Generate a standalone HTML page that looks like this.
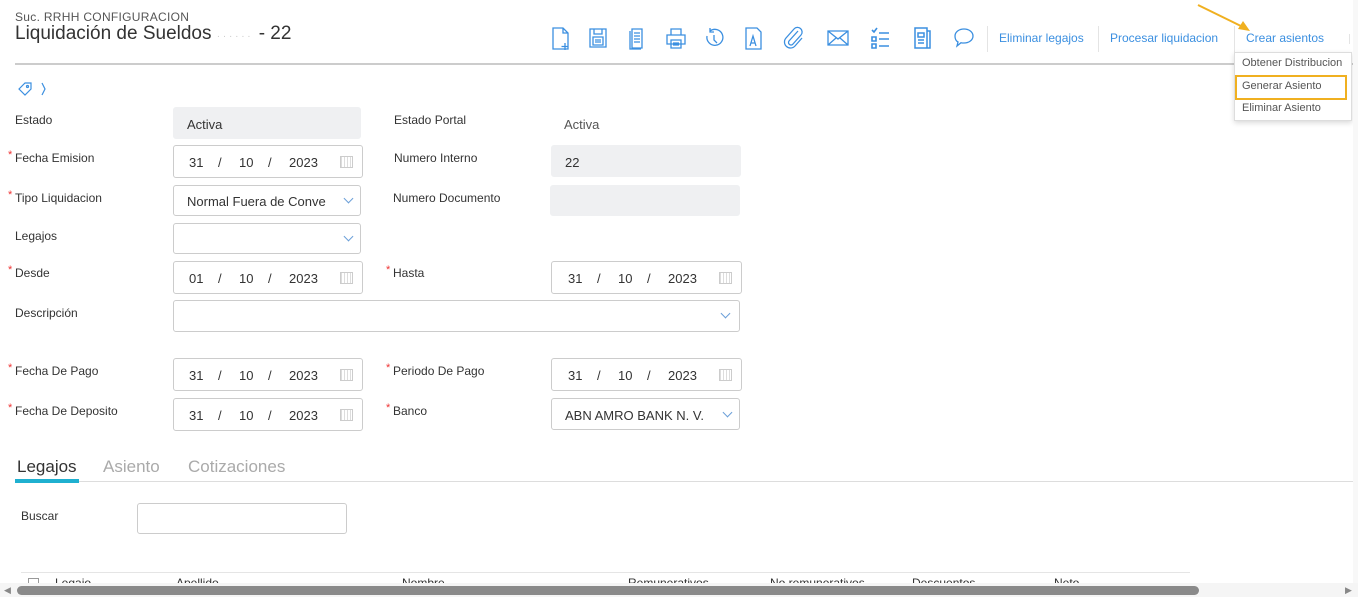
<!DOCTYPE html>
<html><head><meta charset="utf-8"><style>
*{box-sizing:border-box;margin:0;padding:0}
body{width:1358px;height:597px;overflow:hidden;background:#fff;font-family:"Liberation Sans",Arial,sans-serif;color:#333;position:relative}
.a{position:absolute;white-space:nowrap}
.lbl{font-size:12px;color:#333}
.req::before{content:"*";color:#e33;font-size:11px;position:absolute;left:-7px;top:-2px}
.box{position:absolute;border:1px solid #ccc;border-radius:3px;background:#fff;height:33px}
.gray{background:#eff0f2;border-color:#eff0f2}
.date span{position:absolute;top:9px;font-size:13px;color:#333}
.cal{position:absolute;right:9px;top:10px;width:13px;height:12px;border:1px solid #ccc;background:repeating-linear-gradient(90deg,#ddd 0 1px,#fff 1px 3px)}
.chev{position:absolute;right:8px;top:10px;width:7px;height:7px;border-right:1.5px solid #6b9fd8;border-bottom:1.5px solid #6b9fd8;transform:rotate(45deg)}
.val{position:absolute;left:13px;top:9px;font-size:13px;color:#333}
.ic{position:absolute;top:26px}
.lnk{font-size:12px;color:#3b8fe0;top:31px}
.sep{position:absolute;top:26px;width:1px;height:26px;background:#e4e4e4}
</style></head><body>
<div class="a" style="left:15px;top:10px;font-size:12px;color:#555;letter-spacing:.3px">Suc. RRHH CONFIGURACION</div>
<div class="a" style="left:15px;top:23px;font-size:19px;color:#333">Liquidación de Sueldos <span style="color:#ccc;font-size:10px">· · · · · · </span> &nbsp;- 22</div>
<div class="a" style="left:15px;top:63px;width:1343px;height:2px;background:#ccc"></div>

<svg class="ic" style="left:550px" width="425" height="26" viewBox="0 0 425 26" fill="none" stroke="#3b8fe0" stroke-width="1.3">
<path d="M3 2h10l5 5v16H3z M13 2v5h5 M15 17v7 M11.5 20.5h7"/>
<g transform="translate(38 0)"><path d="M2 3h16v18H2z M6 3v5h8V3 M5 11h10v8H5z M7 14h6 M7 16h6"/></g>
<g transform="translate(77 0)"><path d="M5 3h10v19H5z M3 5v18h11 M7 7h6 M7 10h6 M7 13h6 M7 16h6"/></g>
<g transform="translate(115 0)"><path d="M6 3h10v6H6z M2 9h18v9H2z M6 14h10v8H6z M8 17h6 M8 19h6"/></g>
<g transform="translate(153 0)"><path d="M7 5a8 8 0 1 1-3 5 M7 2v4h4 M11 9v5l3 3"/></g>
<g transform="translate(193 0)"><path d="M3 2h11l4 4v17H3z M7 20l3-10 3 10 M8 17h4"/></g>
<g transform="translate(232 0)"><path d="M16 5l-9 10a2.5 2.5 0 0 0 4 3l8-9a4.5 4.5 0 0 0-7-6l-8 9a6 6 0 0 0 9 8l7-8"/></g>
<g transform="translate(276 0)"><path d="M2 5h20v14H2z M2 5l10 8 10-8 M2 19l8-7 M22 19l-8-7"/></g>
<g transform="translate(320 0)"><path d="M2 4l2 2 3-4 M2 11h4v4H2z M2 18h4v4H2z M9 7h10 M9 13h10 M9 20h10" stroke-width="1.6"/></g>
<g transform="translate(362 0)"><path d="M3 2h12v20H3z M15 5h3v17H5 M6 7h6v4H6z M6 14h6 M6 17h6" stroke-width="1.5"/></g>
<g transform="translate(403 0)"><path d="M11 3c5 0 9 3 9 7s-4 7-9 7c-1 0-2 0-3-.3L4 20l1-4c-2-1-3-3-3-6 0-4 4-7 9-7z"/></g>
</svg>
<div class="sep" style="left:987px"></div>
<div class="a lnk" style="left:999px">Eliminar legajos</div>
<div class="sep" style="left:1098px"></div>
<div class="a lnk" style="left:1110px">Procesar liquidacion</div>
<div class="sep" style="left:1234px"></div>
<div class="a lnk" style="left:1246px">Crear asientos</div>
<div class="sep" style="left:1349px;height:10px;top:34px"></div>
<svg class="a" style="left:1195px;top:2px" width="60" height="30"><path d="M3 3L50 26" stroke="#f0b020" stroke-width="2"/><path d="M43 27L55 29 48 19z" fill="#f0b020"/></svg>
<div class="a" style="left:1234px;top:52px;width:118px;height:69px;background:#fff;border:1px solid #ddd;box-shadow:0 2px 5px rgba(0,0,0,.15)"></div>
<div class="a" style="left:1242px;top:57px;font-size:11px;color:#555">Obtener Distribucion</div>
<div class="a" style="left:1235px;top:75px;width:112px;height:25px;border:2px solid #f0b020"></div>
<div class="a" style="left:1242px;top:80px;font-size:11px;color:#555">Generar Asiento</div>
<div class="a" style="left:1242px;top:102px;font-size:11px;color:#555">Eliminar Asiento</div>
<div class="a" style="left:1353px;top:0;width:5px;height:597px;background:#f8f8f8"></div>

<svg class="a" style="left:17px;top:81px" width="30" height="16" fill="none" stroke="#3b8fe0" stroke-width="1.2"><path d="M2 8l6-6h6v6l-6 6z"/><circle cx="10.5" cy="5.5" r="1"/><path d="M25 2l3 6-3 6"/></svg>

<div class="a lbl" style="left:15px;top:113px">Estado</div>
<div class="box gray" style="left:173px;top:107px;width:188px;height:32px"><span class="val" style="top:9px">Activa</span></div>
<div class="a lbl" style="left:394px;top:113px">Estado Portal</div>
<div class="a" style="left:564px;top:117px;font-size:13px;color:#555">Activa</div>

<div class="a lbl req" style="left:15px;top:151px">Fecha Emision</div>
<div class="box date" style="left:173px;top:145px;width:190px"><span style="left:15px">31</span><span style="left:44px">/</span><span style="left:65px">10</span><span style="left:94px">/</span><span style="left:115px">2023</span><div class="cal"></div></div>
<div class="a lbl" style="left:394px;top:151px">Numero Interno</div>
<div class="box gray" style="left:551px;top:145px;width:190px;height:32px"><span class="val">22</span></div>

<div class="a lbl req" style="left:15px;top:191px">Tipo Liquidacion</div>
<div class="box" style="left:173px;top:185px;width:188px;height:31px"><span class="val" style="top:8px">Normal Fuera de Conve</span><div class="chev" style="top:9px"></div></div>
<div class="a lbl" style="left:393px;top:191px">Numero Documento</div>
<div class="box gray" style="left:550px;top:185px;width:190px;height:31px"></div>

<div class="a lbl" style="left:15px;top:229px">Legajos</div>
<div class="box" style="left:173px;top:223px;width:188px;height:31px"><div class="chev" style="top:9px"></div></div>

<div class="a lbl req" style="left:15px;top:266px">Desde</div>
<div class="box date" style="left:173px;top:261px;width:190px"><span style="left:15px">01</span><span style="left:44px">/</span><span style="left:65px">10</span><span style="left:94px">/</span><span style="left:115px">2023</span><div class="cal"></div></div>
<div class="a lbl req" style="left:393px;top:266px">Hasta</div>
<div class="box date" style="left:551px;top:261px;width:191px"><span style="left:16px">31</span><span style="left:45px">/</span><span style="left:66px">10</span><span style="left:95px">/</span><span style="left:116px">2023</span><div class="cal"></div></div>

<div class="a lbl" style="left:15px;top:306px">Descripción</div>
<div class="box" style="left:173px;top:300px;width:567px;height:32px"><div class="chev" style="top:9px;right:10px"></div></div>

<div class="a lbl req" style="left:15px;top:364px">Fecha De Pago</div>
<div class="box date" style="left:173px;top:358px;width:190px"><span style="left:15px">31</span><span style="left:44px">/</span><span style="left:65px">10</span><span style="left:94px">/</span><span style="left:115px">2023</span><div class="cal"></div></div>
<div class="a lbl req" style="left:393px;top:364px">Periodo De Pago</div>
<div class="box date" style="left:551px;top:358px;width:191px"><span style="left:16px">31</span><span style="left:45px">/</span><span style="left:66px">10</span><span style="left:95px">/</span><span style="left:116px">2023</span><div class="cal"></div></div>

<div class="a lbl req" style="left:15px;top:404px">Fecha De Deposito</div>
<div class="box date" style="left:173px;top:398px;width:190px"><span style="left:15px">31</span><span style="left:44px">/</span><span style="left:65px">10</span><span style="left:94px">/</span><span style="left:115px">2023</span><div class="cal"></div></div>
<div class="a lbl req" style="left:393px;top:404px">Banco</div>
<div class="box" style="left:551px;top:398px;width:189px;height:32px"><span class="val">ABN AMRO BANK N. V.</span><div class="chev"></div></div>

<div class="a" style="left:17px;top:457px;font-size:17px;color:#333">Legajos</div>
<div class="a" style="left:103px;top:457px;font-size:17px;color:#aaa">Asiento</div>
<div class="a" style="left:188px;top:457px;font-size:17px;color:#aaa">Cotizaciones</div>
<div class="a" style="left:15px;top:481px;width:1338px;height:1px;background:#ddd"></div>
<div class="a" style="left:15px;top:479px;width:64px;height:4px;background:#1fb0d0"></div>

<div class="a lbl" style="left:21px;top:509px">Buscar</div>
<div class="box" style="left:137px;top:503px;width:210px;height:31px"></div>

<div class="a" style="left:21px;top:572px;width:1169px;height:1px;background:#e5e5e5"></div>
<div class="a" style="left:28px;top:578px;width:11px;height:11px;border:1px solid #999"></div>
<div class="a lbl" style="left:55px;top:576px">Legajo</div>
<div class="a lbl" style="left:176px;top:576px">Apellido</div>
<div class="a lbl" style="left:402px;top:576px">Nombre</div>
<div class="a lbl" style="left:628px;top:576px">Remunerativos</div>
<div class="a lbl" style="left:770px;top:576px">No remunerativos</div>
<div class="a lbl" style="left:912px;top:576px">Descuentos</div>
<div class="a lbl" style="left:1054px;top:576px">Neto</div>

<div class="a" style="left:0;top:583px;width:1358px;height:14px;background:#f5f5f5"></div>
<div class="a" style="left:17px;top:586px;width:1182px;height:9px;border-radius:5px;background:#8a8a8a"></div>
<div class="a" style="left:4px;top:585px;font-size:9px;color:#888">◀</div>
<div class="a" style="left:1345px;top:585px;font-size:9px;color:#888">▶</div>
</body></html>
